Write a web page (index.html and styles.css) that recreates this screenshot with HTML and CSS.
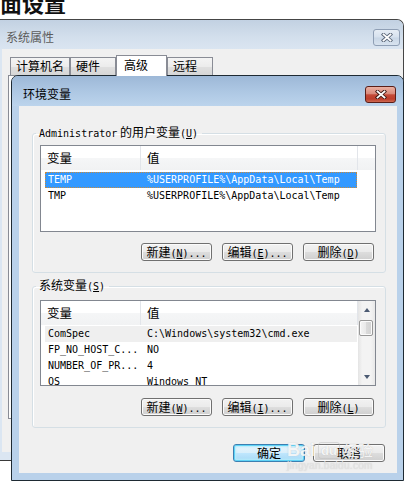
FILE: index.html
```html
<!DOCTYPE html>
<html lang="zh-CN">
<head>
<meta charset="utf-8">
<title>环境变量</title>
<link rel="stylesheet" href="styles.css">
</head>
<body>
<div class="page">
  <div class="heading"><span class="heading-text">面设置</span></div>

  <div class="outer">
    <div class="outer-title">
      <span class="outer-title-text">系统属性</span>
      <span class="close close-inactive">
        <svg width="12" height="9" viewBox="0 0 12 9"><path d="M2.5 1.5 L9.5 7.5 M9.5 1.5 L2.5 7.5" stroke="#5a6678" stroke-width="3.6" stroke-linecap="square"/><path d="M2.5 1.5 L9.5 7.5 M9.5 1.5 L2.5 7.5" stroke="#fff" stroke-width="1.8" stroke-linecap="square"/></svg>
      </span>
    </div>
    <div class="outer-client">
      <div class="tabs">
        <div class="tab">计算机名</div>
        <div class="tab">硬件</div>
        <div class="tab tab-active">高级</div>
        <div class="tab">远程</div>
      </div>
      <div class="tab-panel"></div>
    </div>
  </div>

  <div class="inner">
    <div class="inner-title">
      <span class="inner-title-text">环境变量</span>
      <span class="close close-red">
        <svg width="12" height="9" viewBox="0 0 12 9"><path d="M2.5 1.5 L9.5 7.5 M9.5 1.5 L2.5 7.5" stroke="#3b1712" stroke-width="3.6" stroke-linecap="square"/><path d="M2.5 1.5 L9.5 7.5 M9.5 1.5 L2.5 7.5" stroke="#fff" stroke-width="1.8" stroke-linecap="square"/></svg>
      </span>
    </div>
    <div class="inner-body">
      <div class="client">
        <fieldset class="group group-user">
          <legend class="group-label"><span class="m">Administrator</span> 的用户变量<span class="m">(<u>U</u>)</span></legend>
          <div class="listbox listbox-user">
            <div class="list-main">
              <div class="lv-header">
                <div class="hcell hcell-name">变量</div>
                <div class="hcell hcell-val">值</div>
                <div class="hcell hcell-rest"></div>
              </div>
              <div class="lv-rows">
                <div class="lv-row sel"><span>TEMP</span><span>%USERPROFILE%\AppData\Local\Temp</span></div>
                <div class="lv-row"><span>TMP</span><span>%USERPROFILE%\AppData\Local\Temp</span></div>
              </div>
            </div>
          </div>
          <div class="btn-row btn-row-user">
            <button class="btn">新建<span class="m">(<u>N</u>)...</span></button>
            <button class="btn">编辑<span class="m">(<u>E</u>)...</span></button>
            <button class="btn">删除<span class="m">(<u>D</u>)</span></button>
          </div>
        </fieldset>

        <fieldset class="group group-sys">
          <legend class="group-label">系统变量<span class="m">(<u>S</u>)</span></legend>
          <div class="listbox listbox-sys">
            <div class="list-main">
              <div class="lv-header">
                <div class="hcell hcell-name">变量</div>
                <div class="hcell hcell-val">值</div>
              </div>
              <div class="lv-rows lv-rows-sys">
                <div class="lv-row hot"><span>ComSpec</span><span>C:\Windows\system32\cmd.exe</span></div>
                <div class="lv-row"><span>FP_NO_HOST_C...</span><span>NO</span></div>
                <div class="lv-row"><span>NUMBER_OF_PR...</span><span>4</span></div>
                <div class="lv-row"><span>OS</span><span>Windows_NT</span></div>
              </div>
            </div>
            <div class="scrollbar">
              <div class="sb-btn"><span class="arrow-up"></span></div>
              <div class="sb-thumb"></div>
              <div class="sb-btn sb-btn-down"><span class="arrow-down"></span></div>
            </div>
          </div>
          <div class="btn-row btn-row-sys">
            <button class="btn">新建<span class="m">(<u>W</u>)...</span></button>
            <button class="btn">编辑<span class="m">(<u>I</u>)...</span></button>
            <button class="btn">删除<span class="m">(<u>L</u>)</span></button>
          </div>
        </fieldset>

        <div class="ok-row">
          <button class="btn btn-wide btn-default">确定</button>
          <button class="btn btn-wide">取消</button>
        </div>
      </div>
    </div>
  </div>

  <div class="watermark">
    <div class="wm-line">
      <span class="wm-bai">Bai</span>
      <span class="wm-du">du</span>
      <span class="wm-jy">经验</span>
    </div>
    <div class="wm-url">jingyan.baidu.com</div>
  </div>
</div>
</body>
</html>
```

FILE: styles.css
```css
html, body {
  margin: 0;
  padding: 0;
  background: #ffffff;
}

body {
  font-family: "Noto Sans CJK SC", "DejaVu Sans", sans-serif;
  font-size: 12px;
  color: #000;
}

.page {
  position: relative;
  width: 405px;
  height: 483px;
  overflow: hidden;
  background: #ffffff;
}

.m {
  font-family: "DejaVu Sans Mono", "Liberation Mono", monospace;
  font-size: 10px;
}

/* ---------- cropped heading ---------- */
.heading {
  height: 19px;
  overflow: hidden;
}

.heading-text {
  display: block;
  margin-top: -9px;
  font-size: 22px;
  line-height: 22px;
  font-weight: 700;
  color: #111;
}

/* ---------- outer window (系统属性) ---------- */
.outer {
  width: 404px;
  box-sizing: border-box;
  border-top: 1px solid #454545;
  border-right: 1px solid #454545;
  border-bottom: 1px solid #3a3a3a;
  border-top-right-radius: 7px;
  background: #dbe6f2;
  padding-bottom: 8px;
}

.outer-title {
  height: 29px;
  box-sizing: border-box;
  padding: 9px 3px 0 6px;
  display: flex;
  justify-content: space-between;
  align-items: flex-start;
  background: linear-gradient(#c2d1e2, #d3dfec 60%, #dae5f1);
  border-top-right-radius: 6px;
}

.outer-title-text {
  line-height: 16px;
  color: #5c5c5c;
}

.close {
  display: flex;
  align-items: center;
  justify-content: center;
  box-sizing: border-box;
  height: 17px;
  border-radius: 3px;
}

.close-inactive {
  width: 27px;
  border: 1px solid #8f9fb5;
  background: linear-gradient(#e6edf5, #d6e1ee 48%, #c8d6e6 52%, #d8e3ef);
}

.close-red {
  width: 31px;
  border: 1px solid #5a1e18;
  background: linear-gradient(#eab0a2 0%, #d9897a 45%, #c44a38 52%, #bc3d2b 80%, #cf6a52 100%);
}

.outer-client {
  margin-left: 2px;
  height: 403px;
  box-sizing: border-box;
  background: #f0f0f0;
  padding: 6px 6px 0 6px;
}

.tabs {
  display: flex;
  align-items: flex-end;
  margin-left: 2px;
}

.tab {
  box-sizing: border-box;
  height: 18px;
  min-width: 46px;
  padding: 0 5px;
  line-height: 16px;
  border: 1px solid #898c95;
  border-bottom: 0;
  background: linear-gradient(#f4f4f4, #ececec 50%, #e0e0e0 52%, #d6d6d6);
  white-space: nowrap;
}

.tab-active {
  position: relative;
  z-index: 1;
  height: 21px;
  min-width: 51px;
  margin-bottom: -1px;
  padding: 1px 7px 0 7px;
  background: #ffffff;
}

.tab-panel {
  height: 344px;
  box-sizing: border-box;
  border: 1px solid #898c95;
  background: #fcfcfc;
}

/* ---------- inner window (环境变量) ---------- */
.inner {
  position: absolute;
  left: 11px;
  top: 75px;
  width: 393px;
  height: 406px;
  box-sizing: border-box;
  border: 1px solid #1e2a33;
  border-radius: 7px 7px 0 0;
  background: #b9d1ea;
  overflow: hidden;
}

.inner-title {
  height: 30px;
  box-sizing: border-box;
  padding: 10px 7px 0 11px;
  display: flex;
  justify-content: space-between;
  align-items: flex-start;
  background: linear-gradient(#9db8d7, #adc7e3 50%, #bcd4ec);
}

.inner-title-text {
  line-height: 16px;
  color: #000;
}

.inner-body {
  padding: 0 6px 7px 7px;
}

.client {
  height: 367px;
  box-sizing: border-box;
  background: #f0f0f0;
  padding-top: 18px;
}

/* group boxes */
.group {
  margin: 0 11px 0 13px;
  padding: 3px 9px 11px 7px;
  border: 1px solid #d5dfe5;
  border-radius: 3px;
  box-shadow: inset 1px 1px 0 #ffffff;
  min-width: 0;
}

.group-sys {
  margin-top: 4px;
  padding-top: 5px;
}

.group-label {
  margin-left: -4px;
  padding: 0 4px 0 3px;
  line-height: 16px;
  font-size: 12px;
  white-space: nowrap;
}

/* list views */
.listbox {
  display: flex;
  box-sizing: border-box;
  border: 1px solid #828790;
  background: #ffffff;
  overflow: hidden;
}

.listbox-user {
  height: 87px;
}

.listbox-sys {
  height: 86px;
}

.list-main {
  flex: 1;
  min-width: 0;
  overflow: hidden;
}

.lv-header {
  display: flex;
  height: 24px;
  background: linear-gradient(#ffffff 0%, #ffffff 48%, #f5f6f7 52%, #f1f2f3 100%);
}

.hcell {
  box-sizing: border-box;
  height: 24px;
  line-height: 24px;
  padding-left: 6px;
  border-right: 1px solid #e2e5ea;
  font-size: 12.5px;
}

.hcell-name {
  width: 100px;
}

.hcell-val {
  width: 217px;
}

.hcell-rest {
  flex: 1;
  border-right: 0;
}

.lv-rows {
  padding: 2px 0 0 4px;
}

.lv-rows-sys {
  padding-top: 1px;
}

.lv-row {
  display: grid;
  grid-template-columns: 99px 1fr;
  box-sizing: border-box;
  width: 312px;
  height: 16px;
  line-height: 16px;
  padding-left: 3px;
  font-family: "DejaVu Sans Mono", "Liberation Mono", monospace;
  font-size: 10px;
  white-space: nowrap;
  overflow: hidden;
}

.lv-row.sel {
  background: #3399ff;
  color: #ffffff;
  outline: 1px dotted #c98a3a;
  outline-offset: -1px;
}

.lv-row.hot {
  background: #efefef;
}

/* scrollbar */
.scrollbar {
  width: 17px;
  display: flex;
  flex-direction: column;
  background: linear-gradient(90deg, #e4e4e4, #f3f3f3 25%, #f3f3f3 75%, #e8e8e8);
}

.sb-btn {
  height: 17px;
  display: flex;
  align-items: center;
  justify-content: center;
}

.sb-btn-down {
  margin-top: auto;
}

.arrow-up {
  width: 0;
  height: 0;
  border-left: 3.5px solid transparent;
  border-right: 3.5px solid transparent;
  border-bottom: 4px solid #4b5a72;
}

.arrow-down {
  width: 0;
  height: 0;
  border-left: 3.5px solid transparent;
  border-right: 3.5px solid transparent;
  border-top: 4px solid #4b5a72;
}

.sb-thumb {
  margin: 2px 2px 0 1px;
  height: 16px;
  box-sizing: border-box;
  border: 1px solid #979797;
  border-radius: 2px;
  background: linear-gradient(90deg, #f4f4f4, #e9e9e9 50%, #dadada 52%, #d2d2d2);
  box-shadow: inset 0 0 0 1px #fbfbfb;
}

/* buttons */
.btn-row {
  display: flex;
  justify-content: flex-end;
  gap: 10px;
  margin-top: 13px;
  margin-right: 2px;
}

.btn-row-user {
  margin-top: 11px;
}

.btn-row-sys {
  margin-top: 12px;
}

.btn {
  box-sizing: border-box;
  width: 71px;
  height: 18px;
  margin: 0;
  padding: 0;
  border: 1px solid #707070;
  border-radius: 3px;
  background: linear-gradient(#f2f2f2 0%, #ebebeb 48%, #dddddd 52%, #cfcfcf 100%);
  box-shadow: inset 0 0 0 1px #fbfbfb;
  font-family: "Noto Sans CJK SC", "DejaVu Sans", sans-serif;
  font-size: 12px;
  line-height: 16px;
  color: #000;
  text-align: center;
  white-space: nowrap;
}

.ok-row {
  display: flex;
  justify-content: flex-end;
  gap: 8px;
  margin-top: 16px;
  margin-right: 12px;
}

.btn-wide {
  width: 72px;
}

.btn-default {
  border-color: #3c7fb1;
  background: linear-gradient(#e9f5fc 0%, #d9effb 48%, #bee6fd 52%, #a7d9f5 100%);
  box-shadow: inset 0 0 0 1px #5fd3f6, inset 0 0 2px 2px #b5ebfb;
}

/* ---------- faint Baidu watermark over the dialog ---------- */
.watermark {
  position: absolute;
  left: 287px;
  top: 440px;
  width: 95px;
  pointer-events: none;
  color: rgba(255, 255, 255, 0.85);
  text-shadow: 0 0 1px rgba(150, 150, 150, 0.55);
}

.wm-line {
  display: flex;
  align-items: center;
  gap: 3px;
  height: 20px;
}

.wm-bai {
  font-family: "Liberation Sans", sans-serif;
  font-weight: 700;
  font-size: 18px;
  line-height: 20px;
}

.wm-du {
  font-family: "Liberation Sans", sans-serif;
  font-weight: 700;
  font-size: 13px;
  line-height: 15px;
  padding: 0 2px;
  border: 1px solid rgba(190, 190, 190, 0.5);
  border-radius: 3px;
}

.wm-jy {
  font-size: 15px;
  line-height: 20px;
}

.wm-url {
  font-family: "Liberation Sans", sans-serif;
  font-size: 10px;
  line-height: 11px;
  color: rgba(230, 230, 230, 0.9);
  text-shadow: 0 0 1px rgba(170, 170, 170, 0.5);
  letter-spacing: 0.3px;
}
```
